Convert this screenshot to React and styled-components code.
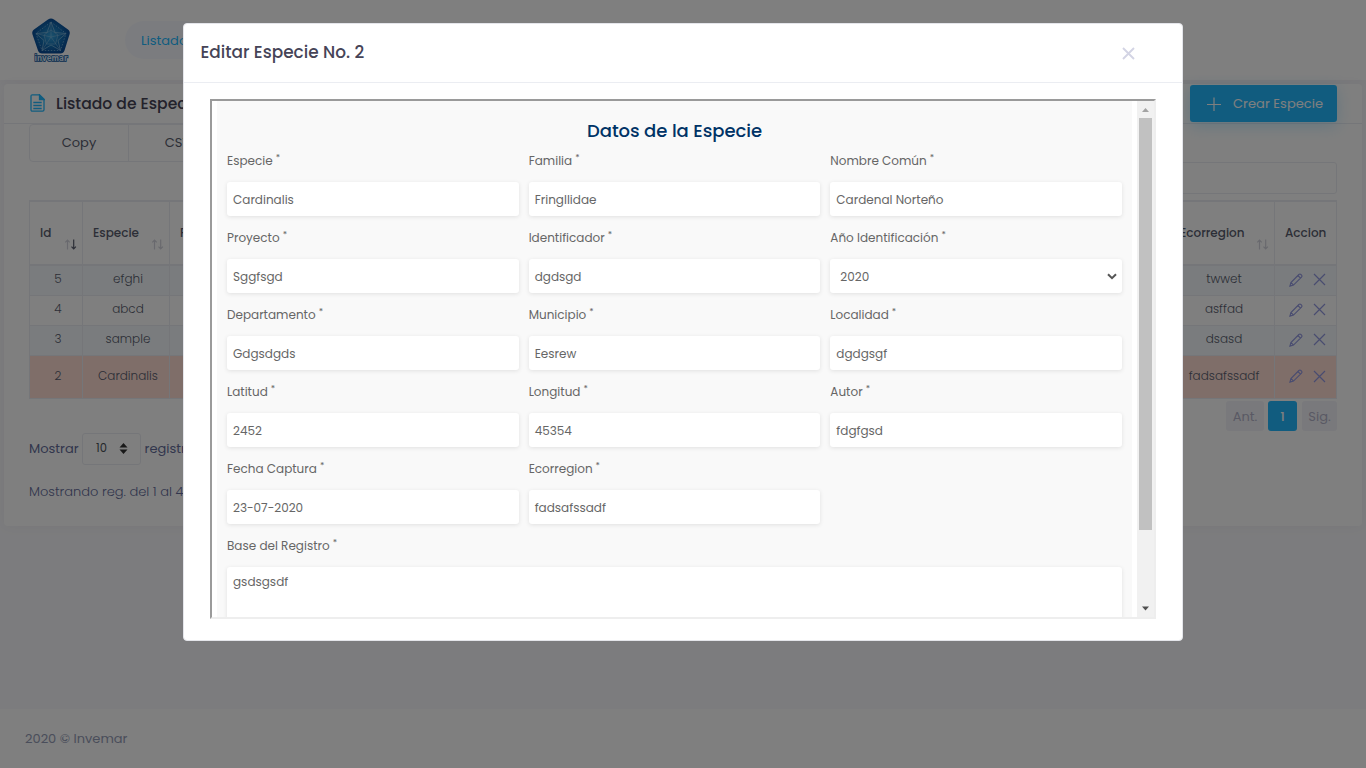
import React from "react";
import styled, { createGlobalStyle } from "styled-components";

const Global = createGlobalStyle`
  * { box-sizing: border-box; }
  body {
    margin: 0;
    background: #f9f9fc;
    color: #646c9a;
    font-family: Poppins, Inter, "Open Sans", sans-serif;
    font-feature-settings: "cv11";
    font-size: 13px;
    font-weight: 300;
    overflow: hidden;
  }
`;

const Page = styled.div`
  height: 768px;
  display: flex;
  flex-direction: column;
`;

const Header = styled.header`
  flex: none;
  height: 80px;
  background: #fff;
  display: flex;
  align-items: center;
  padding-left: 31px;
  gap: 54px;
  box-shadow: 0 0 10px rgba(82, 63, 105, 0.06);
`;

const NavPill = styled.a`
  height: 38px;
  line-height: 39px;
  padding: 0 16px;
  border-radius: 19px;
  background: #f7f9ff;
  color: #22b9ff;
  font-weight: 400;
`;

const Card = styled.section`
  flex: none;
  margin: 4px 4px 0;
  height: 442px;
  background: #fff;
  border-radius: 4px;
  box-shadow: 0 0 13px rgba(82, 63, 105, 0.06);
`;

const CardHead = styled.div`
  height: 40px;
  border-bottom: 1px solid #ebedf2;
  padding: 0 25px;
  display: flex;
  align-items: center;
  svg { margin: 0 11px 2px 1px; flex: none; }
`;

const CardTitle = styled.h3`
  margin: 0;
  flex: 1;
  font-size: 15.6px;
  font-weight: 500;
  color: #464457;
`;

const CreateButton = styled.button`
  width: 147px;
  height: 37px;
  border: 0;
  border-radius: 3px;
  background: #22b9ff;
  color: #fff;
  font: 400 13px Poppins, Inter, sans-serif;
  font-feature-settings: inherit;
  letter-spacing: 0.05px;
  display: flex;
  align-items: center;
  padding: 0 0 0 16px;
  box-shadow: 0 4px 16px rgba(34, 185, 255, 0.25);
  svg { margin: 0 11px 0 0; }
`;

const CardBody = styled.div`
  padding: 0 25px;
`;

const ButtonGroup = styled.div`
  display: flex;
  height: 38px;
  width: 500px;
  border: 1px solid #ebedf2;
  border-radius: 4px;
`;

const GroupButton = styled.span`
  width: 99px;
  border-right: 1px solid #ebedf2;
  text-align: center;
  line-height: 36px;
  color: #595d6e;
  font-weight: 400;
`;

const Search = styled.div`
  width: 300px;
  height: 32px;
  margin: 0 0 6px auto;
  border: 1px solid #ebedf2;
  border-radius: 3px;
`;

const Table = styled.table`
  width: 1308px;
  table-layout: fixed;
  border-collapse: collapse;
  border: 1px solid #ebedf2;
`;

const Th = styled.th`
  height: 64px;
  padding: 0 10px 3px;
  border: 1px solid #ebedf2;
  border-bottom-width: 2px;
  border-top-width: 2px;
  color: #595d6e;
  font-size: 12px;
  font-weight: 500;
  text-align: left;
`;

const ThInner = styled.div`
  display: flex;
  justify-content: space-between;
  white-space: nowrap;
  height: 15px;
  svg { flex: none; margin: 15px -5px 0 0; overflow: visible; }
`;

const Row = styled.tr`
  height: ${(p) => (p.$tall ? 43 : 30)}px;
  background: ${(p) => p.$bg};
`;

const Td = styled.td`
  padding: 0 0 2px 4px;
  border: 1px solid #ebedf2;
  text-align: center;
  color: #595d6e;
  font-size: 12px;
`;

const Actions = styled.div`
  display: flex;
  gap: 10px;
  justify-content: center;
  align-items: center;
  padding: 1px 1px 0 0;
`;

const Pager = styled.div`
  display: flex;
  justify-content: flex-end;
  margin-top: 2px;
  height: 30px;
`;

const PageItem = styled.span`
  width: ${(p) => p.$w}px;
  margin-left: ${(p) => p.$gap || 4}px;
  border-radius: 3px;
  line-height: 31px;
  text-align: center;
  background: ${(p) => (p.$on ? "#22b9ff" : "#f3f3f8")};
  color: ${(p) => (p.$on ? "#fff" : "#b2b3c9")};
  font-weight: ${(p) => (p.$on ? 500 : 400)};
`;

const Length = styled.div`
  display: flex;
  align-items: center;
  height: 32px;
  margin-top: 2px;
  gap: 3.5px;
  font-weight: 400;
`;

const LengthSelect = styled.div`
  width: 59px;
  height: 32px;
  border: 1px solid #ebedf2;
  border-radius: 3px;
  display: flex;
  align-items: center;
  justify-content: space-between;
  padding: 0 12.5px 0 13px;
  font-size: 11.5px;
  color: #495057;
`;

const Info = styled.p`
  margin: 18px 0 0;
  line-height: 18px;
`;

const Footer = styled.footer`
  height: 59px;
  margin-top: auto;
  padding-left: 25px;
  line-height: 59px;
  background: #fff;
  color: #959cb6;
  font-weight: 400;
`;

const Overlay = styled.div`
  position: fixed;
  inset: 0;
  background: rgba(0, 0, 0, 0.5);
  display: flex;
  justify-content: center;
  align-items: flex-start;
  padding-top: 23px;
`;

const Modal = styled.div`
  width: 1000px;
  height: 618px;
  background: #fff;
  border: 1px solid #e4e5ea;
  border-radius: 4px;
`;

const ModalHead = styled.div`
  height: 59px;
  border-bottom: 1px solid #ebedf2;
  display: flex;
  align-items: center;
  justify-content: space-between;
  padding: 0 47px 2px 16.5px;
  svg { margin-top: 2px; }
`;

const ModalTitle = styled.h5`
  margin: 0;
  font-size: 16.9px;
  font-weight: 500;
  color: #464457;
`;

const Frame = styled.div`
  margin: 16px 26px 0;
  width: 946px;
  height: 520px;
  border: 2px solid;
  border-color: #9a9a9a #eee #eee #9a9a9a;
  display: flex;
  overflow: hidden;
`;

const Form = styled.div`
  margin: 0 5px;
  width: 915px;
  height: 560px;
  padding: 0 10px;
  background: #f9f9f9;
  color: #666;
  font-weight: 400;
`;

const FormTitle = styled.h2`
  margin: 0;
  padding-top: 16px;
  height: 45px;
  line-height: 28px;
  text-align: center;
  color: #036;
  font-size: 18px;
  font-weight: 500;
  letter-spacing: -0.06px;
`;

const Grid = styled.div`
  display: grid;
  grid-template-columns: repeat(3, 1fr);
  column-gap: 10px;
`;

const Field = styled.div`
  height: 77px;
  grid-column: ${(p) => (p.$wide ? "1 / -1" : "auto")};
  grid-row: ${(p) => (p.$wide ? 6 : "auto")};
`;

const Label = styled.label`
  display: block;
  height: 36px;
  line-height: 30px;
  font-size: 12px;
  sup { font-size: 9px; line-height: 0; vertical-align: 4px; margin-left: 3px; }
`;

const Input = styled.div`
  height: ${(p) => (p.$tall ? 100 : 34)}px;
  line-height: ${(p) => (p.$tall ? 29 : 35)}px;
  padding: 0 5px 0 ${(p) => (p.$select ? 10 : 6)}px;
  background: #fff;
  border-radius: 3px;
  box-shadow: 0 1px 4px rgba(0, 0, 0, 0.1);
  font-size: 12px;
  display: flex;
  align-items: ${(p) => (p.$tall ? "flex-start" : "center")};
  justify-content: space-between;
`;

const Scrollbar = styled.div`
  width: 17px;
  background: #f1f1f1;
  display: flex;
  flex-direction: column;
  align-items: center;
  svg { flex: none; display: block; }
`;

const Thumb = styled.div`
  width: 13px;
  height: 412px;
  margin-bottom: auto;
  background: #c1c1c1;
`;

const Logo = () => (
  <svg width="40" height="50" viewBox="0 -3 40 50">
    <defs>
      <radialGradient id="sea">
        <stop offset="0" stopColor="#38a4dc" />
        <stop offset="0.55" stopColor="#1470b4" />
        <stop offset="1" stopColor="#084c98" />
      </radialGradient>
    </defs>
    <path d="M17 1.500Q20-.5 23 1.500L37 11.500Q39.500 13.500 38.500 16.500L33.500 32.500Q32.500 35.500 29.500 35.500H11Q8 35.500 7 32.500L1.500 16.500Q.5 13.500 3 11.500Z" fill="url(#sea)" />
    <g fill="none" stroke="#8cc0e0" strokeWidth="0.8" opacity="0.85">
      <path d="M20 4L24 14.500L35 15.500L27 22.500L29.500 32.500L20 27L11 32.500L13 22.500L5 15.500L16 14.500Z" />
      <path d="M20 4V19L35 15.500M20 19L29.500 32.500M20 19L11 32.500M20 19L5 15.500" strokeWidth="0.6" />
      <path d="M20 12L27 17L24.500 26H15.500L13 17Z" strokeWidth="0.6" />
      <path d="M20 4L35 15.500L29.500 32.500H11L5 15.500Z" strokeDasharray="1.500 1.500" />
    </g>
    <text x="3.500" y="43" textLength="33" lengthAdjust="spacingAndGlyphs" fontFamily="DejaVu Sans" fontWeight="700" fontSize="8" fill="#dcebf8" stroke="#0e57a0" strokeWidth="1.600" paintOrder="stroke">invemar</text>
  </svg>
);

const FileIcon = () => (
  <svg width="15" height="18" viewBox="0 0 15 18" fill="none" stroke="#22b9ff" strokeWidth="1.3">
    <path d="M1 2.200Q1 .8 2.400.8H9.500L14 5.300V15.800Q14 17.200 12.600 17.200H2.400Q1 17.200 1 15.800Z" />
    <path d="M9.500 1V5.500H14Z" fill="#22b9ff" />
    <path d="M3.300 8.500H11.700M3.300 11.500H11.700M3.300 14.500H11.700" />
  </svg>
);

const PlusIcon = () => (
  <svg width="16" height="16" viewBox="0 0 16 16" stroke="#fff" strokeWidth="1.200">
    <path d="M1 8.500H15M8 1.500V15" />
  </svg>
);

const Pencil = () => (
  <svg width="14" height="14" viewBox="0 0 14 14" fill="none" stroke="#9298e0" strokeWidth="1.100">
    <path d="M.9 13.100L1.900 9.500L9.900 1.500Q10.900.5 11.900 1.500L12.500 2.100Q13.500 3.100 12.500 4.100L4.500 12.100ZM1.900 9.500L4.500 12.100M8.900 2.500L11.500 5.100" />
  </svg>
);

const Cross = () => (
  <svg width="13" height="13" viewBox="0 0 13 13" stroke="#9298e0" strokeWidth="1.200">
    <path d="M1 1L12 12M12 1L1 12" />
  </svg>
);

const Sort = ({ desc }) => (
  <svg width="12" height="11" viewBox="0 0 12 11" fill="none" strokeWidth="1.200">
    <path d="M2.500 10.500V1M.3 3.300L2.500 1L4.700 3.300" stroke="#d2d3dc" />
    <path d="M8.700.5V10M6.500 7.700L8.700 10L10.900 7.700" stroke={desc ? "#595d6e" : "#d2d3dc"} />
  </svg>
);

const Updown = () => (
  <svg width="9" height="11" viewBox="0 0 9 11" fill="#333">
    <path d="M.5 4.500L4.500 0L8.500 4.500ZM.5 6.500L4.500 11L8.500 6.500Z" />
  </svg>
);

const CloseIcon = () => (
  <svg width="13" height="13" viewBox="0 0 13 13" stroke="#d3d4e4" strokeWidth="1.900">
    <path d="M1 1L12 12M12 1L1 12" />
  </svg>
);

const Chevron = () => (
  <svg width="10" height="7" viewBox="0 0 10 7" fill="none" stroke="#555" strokeWidth="2">
    <path d="M1 1.200L5 5.200L9 1.200" />
  </svg>
);

const ScrollArrow = ({ down }) => (
  <svg width="17" height="17" viewBox="0 0 17 17">
    <path d={down ? "M5 6.500H12L8.500 10.500Z" : "M5 11H12L8.500 7Z"} fill={down ? "#505050" : "#a3a3a3"} />
  </svg>
);

const records = [
  [5, "efghi", "twwet", "#f4f9fc"],
  [4, "abcd", "asffad", "#fff"],
  [3, "sample", "dsasd", "#f4f9fc"],
  [2, "Cardinalis", "fadsafssadf", "#ffdcd3"],
];

const fields = [
  ["Especie", "Cardinalis"],
  ["Familia", "Fringllidae"],
  ["Nombre Común", "Cardenal Norteño"],
  ["Proyecto", "Sggfsgd"],
  ["Identificador", "dgdsgd"],
  ["Año Identificación", "2020"],
  ["Departamento", "Gdgsdgds"],
  ["Municipio", "Eesrew"],
  ["Localidad", "dgdgsgf"],
  ["Latitud", "2452"],
  ["Longitud", "45354"],
  ["Autor", "fdgfgsd"],
  ["Fecha Captura", "23-07-2020"],
  ["Ecorregion", "fadsafssadf"],
];

export default function App() {
  return (
    <>
      <Global />
      <Page>
        <Header>
          <Logo />
          <NavPill>Listado</NavPill>
        </Header>
        <Card>
          <CardHead>
            <FileIcon />
            <CardTitle>Listado de Especies</CardTitle>
            <CreateButton><PlusIcon />Crear Especie</CreateButton>
          </CardHead>
          <CardBody>
            <ButtonGroup>
              <GroupButton>Copy</GroupButton>
              <GroupButton>CSV</GroupButton>
            </ButtonGroup>
            <Search />
            <Table>
              <colgroup>
                <col width="53" />
                <col width="87" />
                <col />
                <col width="105" />
                <col width="62" />
              </colgroup>
              <thead>
                <tr>
                  <Th><ThInner>Id<Sort desc /></ThInner></Th>
                  <Th><ThInner>Especie<Sort /></ThInner></Th>
                  <Th><ThInner>Familia</ThInner></Th>
                  <Th><ThInner>Ecorregion<Sort /></ThInner></Th>
                  <Th><ThInner>Accion</ThInner></Th>
                </tr>
              </thead>
              <tbody>
                {records.map(([id, name, region, bg]) => (
                  <Row key={id} $bg={bg} $tall={id === 2}>
                    <Td>{id}</Td>
                    <Td>{name}</Td>
                    <Td />
                    <Td>{region}</Td>
                    <Td><Actions><Pencil /><Cross /></Actions></Td>
                  </Row>
                ))}
              </tbody>
            </Table>
            <Pager>
              <PageItem $w={38}>Ant.</PageItem>
              <PageItem $w={29} $on>1</PageItem>
              <PageItem $w={35} $gap={5}>Sig.</PageItem>
            </Pager>
            <Length>Mostrar<LengthSelect>10<Updown /></LengthSelect>registros</Length>
            <Info>Mostrando reg. del 1 al 4</Info>
          </CardBody>
        </Card>
        <Footer>2020 © Invemar</Footer>
      </Page>
      <Overlay>
        <Modal>
          <ModalHead>
            <ModalTitle>Editar Especie No. 2</ModalTitle>
            <CloseIcon />
          </ModalHead>
          <Frame>
            <Form>
              <FormTitle>Datos de la Especie</FormTitle>
              <Grid>
                {fields.map(([label, value]) => (
                  <Field key={label}>
                    <Label>{label}<sup>*</sup></Label>
                    <Input $select={value === "2020"}>{value}{value === "2020" && <Chevron />}</Input>
                  </Field>
                ))}
                <Field $wide>
                  <Label>Base del Registro<sup>*</sup></Label>
                  <Input $tall>gsdsgsdf</Input>
                </Field>
              </Grid>
            </Form>
            <Scrollbar>
              <ScrollArrow />
              <Thumb />
              <ScrollArrow down />
            </Scrollbar>
          </Frame>
        </Modal>
      </Overlay>
    </>
  );
}
